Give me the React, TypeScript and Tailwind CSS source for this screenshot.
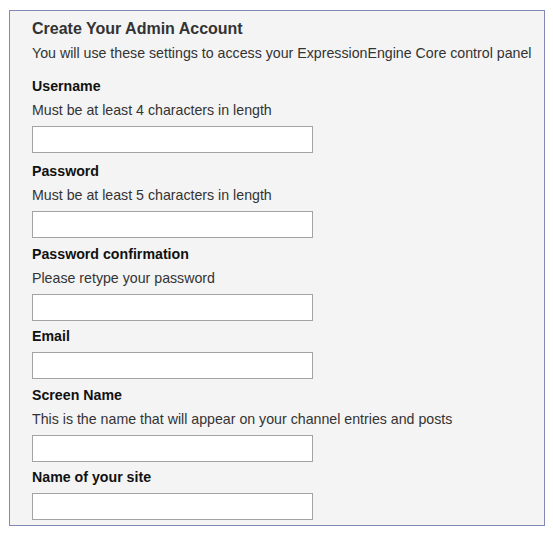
import React from "react";

interface Field {
  label: string;
  hint?: string;
  type?: string;
  gap: string;
}

const fields: Field[] = [
  { label: "Username", hint: "Must be at least 4 characters in length", gap: "mt-[13px]" },
  { label: "Password", hint: "Must be at least 5 characters in length", type: "password", gap: "mt-[8px]" },
  { label: "Password confirmation", hint: "Please retype your password", type: "password", gap: "mt-[6px]" },
  { label: "Email", gap: "mt-[5px]" },
  { label: "Screen Name", hint: "This is the name that will appear on your channel entries and posts", gap: "mt-[6px]" },
  { label: "Name of your site", gap: "mt-[5px]" },
];

const FieldRow: React.FC<{ field: Field }> = ({ field }) => (
  <div className={field.gap}>
    <div className="text-[14.2px] font-bold leading-[20px] text-[#111]">{field.label}</div>
    {field.hint && (
      <div className="mt-[4px] text-[14.2px] leading-[20px] text-[#333]">{field.hint}</div>
    )}
    <input
      type={field.type ?? "text"}
      className="mt-[6px] block h-[27px] w-[281px] border border-[#a3a3a3] bg-white px-1 text-[14px] outline-none"
    />
  </div>
);

export default function App() {
  return (
    <div className="min-h-[534px] bg-white pl-[9px] pt-[10px] font-['Liberation_Sans',Arial,sans-serif]">
      <div className="w-[536px] border border-[#8289b5] bg-[#f4f4f4] pb-[5px] pl-[22px] pt-[8px]">
        <h1 className="text-[16px] font-bold leading-[20px] text-[#333]">Create Your Admin Account</h1>
        <p className="mt-[4px] text-[14.2px] leading-[20px] text-[#333]">
          You will use these settings to access your ExpressionEngine Core control panel
        </p>
        {fields.map((f) => (
          <FieldRow key={f.label} field={f} />
        ))}
      </div>
    </div>
  );
}
